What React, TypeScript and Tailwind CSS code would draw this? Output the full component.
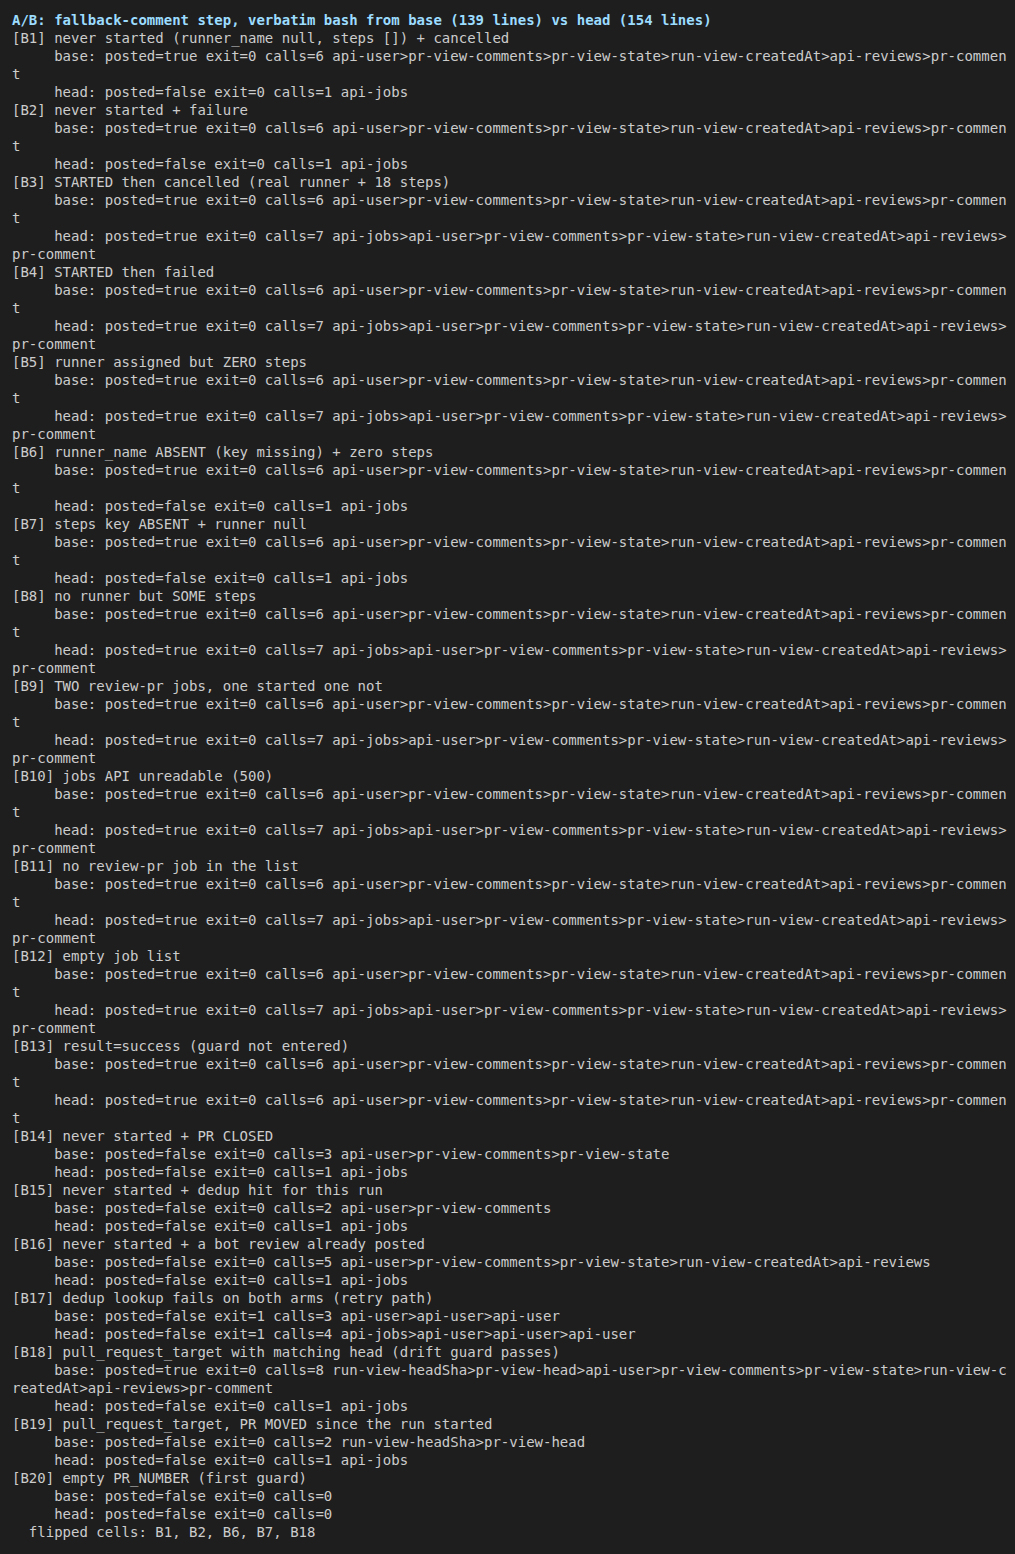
import React from "react";

const BASE_FULL =
  "     base: posted=true exit=0 calls=6 api-user>pr-view-comments>pr-view-state>run-view-createdAt>api-reviews>pr-commen";
const HEAD_JOBS = "     head: posted=false exit=0 calls=1 api-jobs";
const HEAD_FULL =
  "     head: posted=true exit=0 calls=7 api-jobs>api-user>pr-view-comments>pr-view-state>run-view-createdAt>api-reviews>";

const skipped = (title: string) => [title, BASE_FULL, "t", HEAD_JOBS];
const posted = (title: string) => [title, BASE_FULL, "t", HEAD_FULL, "pr-comment"];

const lines: string[] = [
  ...skipped("[B1] never started (runner_name null, steps []) + cancelled"),
  ...skipped("[B2] never started + failure"),
  ...posted("[B3] STARTED then cancelled (real runner + 18 steps)"),
  ...posted("[B4] STARTED then failed"),
  ...posted("[B5] runner assigned but ZERO steps"),
  ...skipped("[B6] runner_name ABSENT (key missing) + zero steps"),
  ...skipped("[B7] steps key ABSENT + runner null"),
  ...posted("[B8] no runner but SOME steps"),
  ...posted("[B9] TWO review-pr jobs, one started one not"),
  ...posted("[B10] jobs API unreadable (500)"),
  ...posted("[B11] no review-pr job in the list"),
  ...posted("[B12] empty job list"),
  "[B13] result=success (guard not entered)",
  BASE_FULL,
  "t",
  "     head: posted=true exit=0 calls=6 api-user>pr-view-comments>pr-view-state>run-view-createdAt>api-reviews>pr-commen",
  "t",
  "[B14] never started + PR CLOSED",
  "     base: posted=false exit=0 calls=3 api-user>pr-view-comments>pr-view-state",
  HEAD_JOBS,
  "[B15] never started + dedup hit for this run",
  "     base: posted=false exit=0 calls=2 api-user>pr-view-comments",
  HEAD_JOBS,
  "[B16] never started + a bot review already posted",
  "     base: posted=false exit=0 calls=5 api-user>pr-view-comments>pr-view-state>run-view-createdAt>api-reviews",
  HEAD_JOBS,
  "[B17] dedup lookup fails on both arms (retry path)",
  "     base: posted=false exit=1 calls=3 api-user>api-user>api-user",
  "     head: posted=false exit=1 calls=4 api-jobs>api-user>api-user>api-user",
  "[B18] pull_request_target with matching head (drift guard passes)",
  "     base: posted=true exit=0 calls=8 run-view-headSha>pr-view-head>api-user>pr-view-comments>pr-view-state>run-view-c",
  "reatedAt>api-reviews>pr-comment",
  HEAD_JOBS,
  "[B19] pull_request_target, PR MOVED since the run started",
  "     base: posted=false exit=0 calls=2 run-view-headSha>pr-view-head",
  HEAD_JOBS,
  "[B20] empty PR_NUMBER (first guard)",
  "     base: posted=false exit=0 calls=0",
  "     head: posted=false exit=0 calls=0",
  "  flipped cells: B1, B2, B6, B7, B18",
];

function App() {
  return (
    <div className="min-h-[1554px] w-full bg-[#1e1e1e] pl-3 pt-[11px] pb-4 font-['DejaVu_Sans_Mono',monospace] text-[14px] leading-[18px] text-[#cccccc]">
      <div className="whitespace-pre font-bold text-[#9cdcfe]">
        A/B: fallback-comment step, verbatim bash from base (139 lines) vs head (154 lines)
      </div>
      {lines.map((line, i) => (
        <div key={i} className="whitespace-pre">
          {line}
        </div>
      ))}
    </div>
  );
}

export default App;
